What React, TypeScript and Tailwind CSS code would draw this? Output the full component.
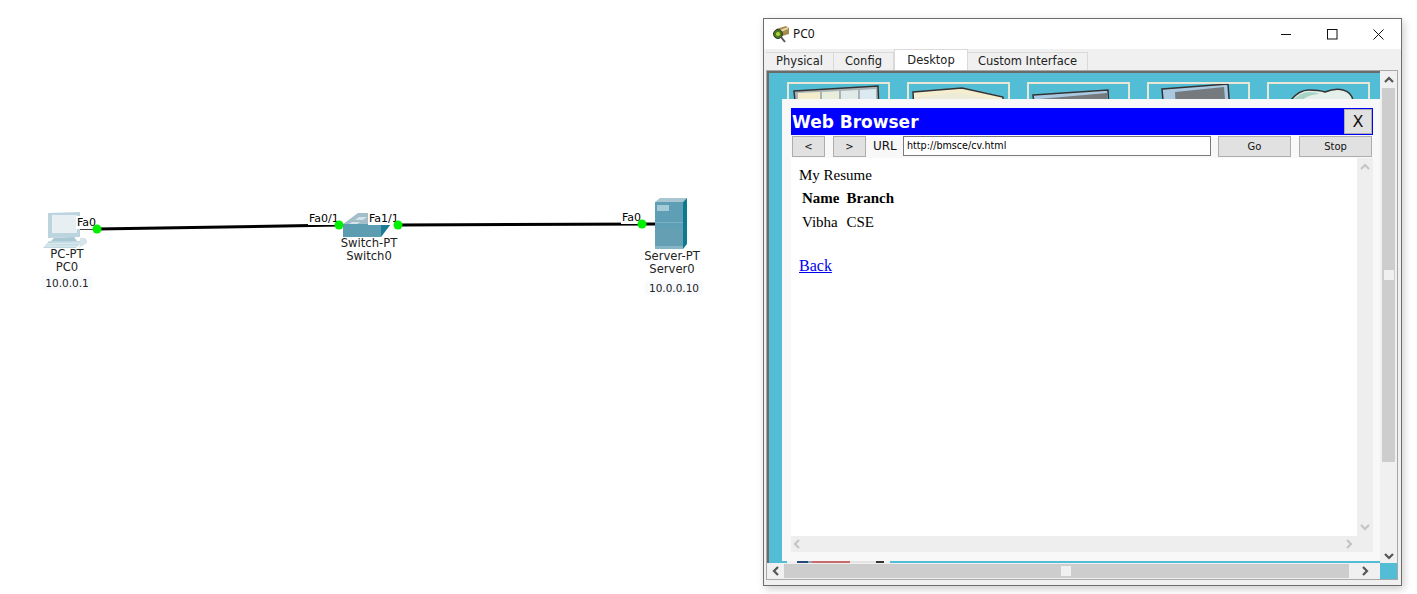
import React from 'react';

const UI_FONT = "font-['DejaVu_Sans',sans-serif]";

// chevrons of the Packet Tracer scroll bars
const Chevron = ({ dir, color = '#555555' }: { dir: 'up' | 'down' | 'left' | 'right'; color?: string }) => {
  const points = {
    up: '1,7 5,3 9,7',
    down: '1,3 5,7 9,3',
    left: '7,1 3,5 7,9',
    right: '3,1 7,5 3,9',
  }[dir];
  return (
    <svg width="10" height="10" viewBox="0 0 10 10">
      <polyline points={points} fill="none" stroke={color} strokeWidth="2.2" />
    </svg>
  );
};

const Port = ({ x, y }: { x: number; y: number }) => (
  <circle cx={x} cy={y} r="4.5" fill="#00f000" />
);

const PortLabel = ({ text, x, y }: { text: string; x: number; y: number }) => (
  <div className="absolute bg-white px-px text-[11px] leading-[13px] text-black" style={{ left: x, top: y }}>
    {text}
  </div>
);

const NodeLabel = ({ lines, cx, y }: { lines: string[]; cx: number; y: number }) => (
  <div
    className="absolute w-[100px] -translate-x-1/2 text-center text-[11.6px] leading-[13px] text-[#222222]"
    style={{ left: cx, top: y }}
  >
    {lines.map((l) => (
      <div key={l}>{l}</div>
    ))}
  </div>
);

const AddressLabel = ({ text, cx, y }: { text: string; cx: number; y: number }) => (
  <div
    className="absolute -translate-x-1/2 bg-[#f8fafd] px-1 text-[10.5px] leading-[14px] text-[#222222]"
    style={{ left: cx, top: y }}
  >
    {text}
  </div>
);

const PcIcon = () => (
  <svg className="absolute left-[42px] top-[210px]" width="46" height="40" viewBox="0 0 46 40">
    <path d="M6 3 L38 2 L38 27 L6 28 Z" fill="#bcd4dd" />
    <path d="M10 5 L35 5 L35 23 L10 23 Z" fill="#e8eff3" />
    <path d="M12 28 L32 27 L35 31 L9 31 Z" fill="#a9c8d4" />
    <path d="M7 31 L40 31 L34 38 L1 38 Z" fill="#c0d8e1" />
    <path d="M5 34 L37 33 M3 36 L35 36" stroke="#e6f0f3" strokeWidth="1" />
    <path d="M38 28 Q46 27 45 33 L37 38 Z" fill="#d6e5ea" />
  </svg>
);

const SwitchIcon = () => (
  <svg className="absolute left-[343px] top-[210px]" width="48" height="28" viewBox="0 0 48 28">
    <polygon points="0,14 15,3 48,3 38,14" fill="#a3bdc9" />
    <polygon points="16,7 24,7 20,10 12,10" fill="#d5e3e9" />
    <polygon points="9,12 17,12 14,14 6,14" fill="#d5e3e9" />
    <rect x="0" y="14" width="38" height="13" fill="#5d9db2" />
    <polygon points="38,14 48,14 38,27" fill="#1a7d95" />
  </svg>
);

const ServerIcon = () => (
  <svg className="absolute left-[655px] top-[197px]" width="33" height="54" viewBox="0 0 33 54">
    <polygon points="0,5 5,1 32,1 28,5" fill="#a8c6d2" />
    <rect x="0" y="5" width="28" height="47" fill="#5f9fb5" />
    <rect x="0" y="31" width="28" height="21" fill="#659fb3" />
    <rect x="0" y="25" width="28" height="1" fill="#7cb0c2" />
    <rect x="0" y="49" width="28" height="3" fill="#86b5c5" />
    <polygon points="28,5 32,1 32,47 28,52" fill="#0d7a92" />
    <rect x="2" y="8" width="12" height="6" fill="#a5cbd8" />
  </svg>
);

const Diagram = () => (
  <div className="relative h-full w-[763px] shrink-0">
    <svg className="absolute inset-0" width="763" height="594">
      <line x1="72" y1="229" x2="97" y2="229" stroke="#000" strokeWidth="1.5" />
      <line x1="97" y1="229" x2="340" y2="225" stroke="#000" strokeWidth="3" />
      <line x1="398" y1="225" x2="655" y2="224" stroke="#000" strokeWidth="3" />
    </svg>
    <PcIcon />
    <SwitchIcon />
    <ServerIcon />
    <PortLabel text="Fa0" x={76} y={216} />
    <PortLabel text="Fa0/1" x={308} y={212} />
    <PortLabel text="Fa1/1" x={368} y={212} />
    <PortLabel text="Fa0" x={621} y={211} />
    <svg className="absolute inset-0" width="763" height="594">
      <Port x={97} y={229} />
      <Port x={339} y={225} />
      <Port x={398} y={225} />
      <Port x={642} y={224} />
    </svg>
    <NodeLabel lines={['PC-PT', 'PC0']} cx={67} y={248} />
    <NodeLabel lines={['Switch-PT', 'Switch0']} cx={369} y={237} />
    <NodeLabel lines={['Server-PT', 'Server0']} cx={672} y={250} />
    <AddressLabel text="10.0.0.1" cx={67} y={276} />
    <AddressLabel text="10.0.0.10" cx={674} y={281} />
  </div>
);

const WindowIcon = () => (
  <svg width="18" height="18" viewBox="0 0 18 18">
    <polygon points="4,4 14,1 17,3 17,9 7,12 4,9" fill="#a68a4c" />
    <polygon points="8,5 16,2 16,4 9,7" fill="#e6d9a6" />
    <circle cx="6" cy="9" r="4.5" fill="#4a7a1e" stroke="#333" strokeWidth="1" />
    <circle cx="6" cy="9" r="2" fill="#b9d23a" />
    <line x1="9" y1="12" x2="13" y2="17" stroke="#555" strokeWidth="2" />
  </svg>
);

const Tab = ({ label, width, active }: { label: string; width: string; active?: boolean }) => (
  <div
    className={
      active
        ? `-mt-[2px] flex h-[21px] items-center justify-center border-x border-t border-[#d9d9d9] bg-white pt-[2px] text-[11.5px] text-[#222222] ${width}`
        : `mt-[1px] flex h-[18px] items-center justify-center border-r border-t border-[#d9d9d9] bg-[#f0f0f0] text-[11.5px] text-[#222222] ${width}`
    }
  >
    {label}
  </div>
);

const Tile = ({ children }: { children: React.ReactNode }) => (
  <div className="relative h-[30px] w-[103px] shrink-0 overflow-hidden border-x-2 border-t-2 border-[#e8e6d4]">
    {children}
  </div>
);

const DesktopTiles = () => (
  <div className="flex gap-[17px] pl-[18px] pt-[9px]">
    <Tile>
      <svg width="99" height="28" viewBox="0 0 99 28">
        <polygon points="5,7 89,2 90,28 7,28" fill="#a9b3b6" stroke="#333333" strokeWidth="1.5" />
        <polygon points="9,9 31,8 31,28 9,28" fill="#f4eccb" />
        <polygon points="33,8 50,7 50,28 33,28" fill="#e9eedb" />
        <polygon points="52,7 69,6 69,28 52,28" fill="#dfeae9" />
        <polygon points="71,6 87,5 87,28 71,28" fill="#dbeaf0" />
      </svg>
    </Tile>
    <Tile>
      <svg width="99" height="28" viewBox="0 0 99 28">
        <polygon points="4,8 53,4 94,13 94,28 5,28" fill="#f4edcf" stroke="#333333" strokeWidth="1.5" />
        <polygon points="9,13 46,9 90,16 90,28 9,28" fill="#ecebd8" />
      </svg>
    </Tile>
    <Tile>
      <svg width="99" height="28" viewBox="0 0 99 28">
        <polygon points="4,11 79,6 80,28 6,28" fill="#a9c9e2" stroke="#333333" strokeWidth="1.5" />
        <polygon points="10,15 78,9 78,28 10,28" fill="#757a7e" />
      </svg>
    </Tile>
    <Tile>
      <svg width="99" height="28" viewBox="0 0 99 28">
        <polygon points="13,5 79,0 81,28 15,28" fill="#a9c9e2" stroke="#333333" strokeWidth="1.5" />
        <polygon points="26,8 75,3 77,28 27,28" fill="#757a7e" />
      </svg>
    </Tile>
    <Tile>
      <svg width="99" height="28" viewBox="0 0 99 28">
        <path d="M22 16 Q30 6 40 6 Q50 6 56 8 Q66 4 74 6 Q82 8 84 16 L84 28 L22 28 Z" fill="#e6f0ea" stroke="#333333" strokeWidth="1.5" />
        <path d="M24 16 Q32 8 40 8 Q48 8 50 10 Q38 11 32 17 Z" fill="#a8d4c4" />
      </svg>
    </Tile>
  </div>
);

const BrowserButton = ({ label, width }: { label: string; width: string }) => (
  <div
    className={`flex h-[21px] items-center justify-center border border-[#adadad] bg-[#e1e1e1] text-[10px] text-[#111111] ${width}`}
  >
    {label}
  </div>
);

// Web Browser dialog floating over the desktop tiles
const BrowserDialog = () => (
  <div className="absolute left-[13px] top-[26px] flex h-[462px] w-[600px] flex-col bg-[#f8f8f8] pl-[9px] pr-[9px] pt-[9px]">
    <div className="flex h-[27px] shrink-0 items-center justify-between border border-[#0000ff] bg-[#0000ff] pr-0">
      <span className="pt-[2px] text-[17px] font-bold leading-none text-white">Web Browser</span>
      <div className="flex h-[25px] w-[28px] items-center justify-center border border-[#adadad] bg-[#e1e1e1] text-[16px] text-[#111111]">
        X
      </div>
    </div>
    <div className="flex h-[23px] shrink-0 items-start pl-px pt-[1px]">
      <BrowserButton label="<" width="w-[33px]" />
      <div className="w-2" />
      <BrowserButton label=">" width="w-[33px]" />
      <span className="ml-[7px] w-[30px] text-[12px] leading-[20px] text-[#111111]">URL</span>
      <div className="flex h-[20px] w-[308px] items-center border border-[#7a7a7a] bg-white pl-[3px] text-[9.6px] text-black">
        http://bmsce/cv.html
      </div>
      <div className="w-[7px]" />
      <BrowserButton label="Go" width="w-[73px]" />
      <div className="w-2" />
      <BrowserButton label="Stop" width="w-[73px]" />
    </div>
    <div className="flex min-h-0 w-[582px] flex-1 flex-col pb-[9px]">
      <div className="flex min-h-0 flex-1">
        <div className="flex-1 bg-white pl-2 pt-[8px] font-['Liberation_Serif',serif] text-[15px] leading-[18px] text-black">
          <p>My Resume</p>
          <table className="border-separate border-spacing-[3px]">
            <tbody>
              <tr className="h-[21px] font-bold">
                <td className="p-0 pr-[4px]">Name</td>
                <td className="p-0">Branch</td>
              </tr>
              <tr className="h-[21px]">
                <td className="p-0 pr-[4px]">Vibha</td>
                <td className="p-0">CSE</td>
              </tr>
            </tbody>
          </table>
          <a className="mt-[22px] block w-fit text-[16px] text-[#0000ee] underline">Back</a>
        </div>
        <div className="flex w-[16px] flex-col items-center justify-between bg-[#eeeeee] py-1">
          <Chevron dir="up" color="#c4c4c4" />
          <Chevron dir="down" color="#c4c4c4" />
        </div>
      </div>
      <div className="flex h-[16px] w-[582px] shrink-0 items-center justify-between bg-[#eeeeee] pl-[1px] pr-[19px]">
        <Chevron dir="left" color="#c4c4c4" />
        <Chevron dir="right" color="#c4c4c4" />
      </div>
    </div>
  </div>
);

// sliver of the second row of desktop tiles, showing under the dialog
const BottomTileSliver = () => (
  <div className="absolute bottom-0 left-[18px] flex h-[3px] w-[103px]">
    <div className="w-[10px] bg-[#f0f0f0]" />
    <div className="w-[11px] bg-[#274a78]" />
    <div className="w-[4px] bg-[#8fa0b0]" />
    <div className="w-[38px] bg-[#c96a6a]" />
    <div className="w-[26px] bg-[#e4e4e4]" />
    <div className="w-[8px] bg-[#333333]" />
    <div className="w-[6px] bg-[#f0f0f0]" />
  </div>
);

const PacketWindow = () => (
  <div className={`mt-[18px] flex h-[568px] w-[639px] flex-col border border-[#6e6e6e] bg-[#f0f0f0] shadow-[2px_3px_8px_rgba(0,0,0,0.2)] ${UI_FONT}`}>
    <div className="flex h-[30px] shrink-0 items-center justify-between bg-white pl-2">
      <div className="flex items-center gap-[3px] font-['Noto_Sans',sans-serif] text-[12px] text-[#111111]">
        <WindowIcon />
        <span>PC0</span>
      </div>
      <div className="flex items-center">
        <div className="flex h-[30px] w-[45px] items-center justify-center">
          <svg width="11" height="11" viewBox="0 0 11 11"><line x1="0" y1="5.5" x2="10" y2="5.5" stroke="#111" /></svg>
        </div>
        <div className="flex h-[30px] w-[46px] items-center justify-center">
          <svg width="11" height="11" viewBox="0 0 11 11"><rect x="0.5" y="0.5" width="9.5" height="9.5" fill="none" stroke="#111" /></svg>
        </div>
        <div className="flex h-[30px] w-[46px] items-center justify-center">
          <svg width="11" height="11" viewBox="0 0 11 11"><path d="M0.5 0.5 L10.5 10.5 M10.5 0.5 L0.5 10.5" stroke="#111" /></svg>
        </div>
      </div>
    </div>
    <div className="flex h-[21px] shrink-0 items-start pl-[2px] pt-[2px]">
      <Tab label="Physical" width="w-[68px]" />
      <Tab label="Config" width="w-[60px]" />
      <Tab label="Desktop" width="w-[74px]" active />
      <Tab label="Custom Interface" width="w-[120px]" />
    </div>
    <div className="mb-[5px] ml-[2px] mr-[3px] flex min-h-0 flex-1 flex-col border border-[#a8a8a8]">
      <div className="flex min-h-0 flex-1">
        <div className="relative min-w-0 flex-1 overflow-hidden border-l-[2px] border-t-[2px] border-[#6b6b6b] bg-[#54bdd6]">
          <DesktopTiles />
          <BottomTileSliver />
          <BrowserDialog />
        </div>
        <div className="flex w-[17px] shrink-0 flex-col bg-[#f0f0f0]">
          <div className="flex h-[17px] shrink-0 items-center justify-center">
            <Chevron dir="up" />
          </div>
          <div className="relative mx-[2px] h-[374px] shrink-0 bg-[#cdcdcd]">
            <div className="absolute left-[2px] top-[182px] h-[10px] w-[10px] bg-[#f0f0f0]" />
          </div>
          <div className="flex-1" />
          <div className="flex h-[17px] shrink-0 items-center justify-center pt-[2px]">
            <Chevron dir="down" />
          </div>
        </div>
      </div>
      <div className="flex h-[16px] shrink-0 items-stretch bg-[#f0f0f0]">
        <div className="flex w-[17px] items-center justify-center">
          <Chevron dir="left" />
        </div>
        <div className="relative my-px w-[565px] bg-[#cdcdcd]">
          <div className="absolute left-[277px] top-[2px] h-[10px] w-[10px] bg-[#f0f0f0]" />
        </div>
        <div className="flex flex-1 items-center justify-center">
          <Chevron dir="right" />
        </div>
        <div className="w-[17px] bg-[#54bdd6]" />
      </div>
    </div>
  </div>
);

export default function App() {
  return (
    <div className={`flex h-[594px] w-[1417px] overflow-hidden bg-white ${UI_FONT}`}>
      <Diagram />
      <PacketWindow />
    </div>
  );
}
